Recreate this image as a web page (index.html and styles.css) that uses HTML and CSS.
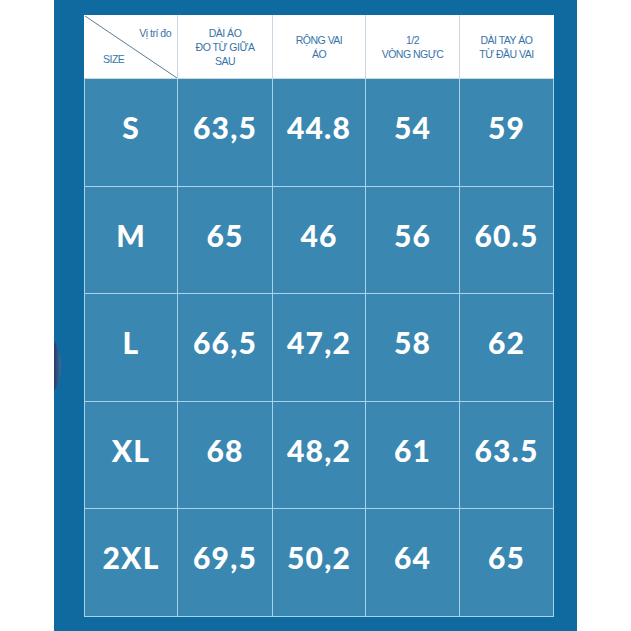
FILE: index.html
```html
<!DOCTYPE html>
<html lang="vi">
<head>
<meta charset="utf-8">
<title>Bảng size</title>
<link rel="stylesheet" href="styles.css">
</head>
<body>
<div class="panel">
  <div class="edge-blob"></div>
  <table class="size-table">
    <colgroup>
      <col class="c1"><col class="c2"><col class="c3"><col class="c4"><col class="c5">
    </colgroup>
    <thead>
      <tr>
        <th class="corner">
          <svg class="diag" viewBox="0 0 100 100" preserveAspectRatio="none"><line x1="0" y1="0" x2="100" y2="100"/></svg>
          <span class="pos">Vị trí đo</span>
          <span class="size">SIZE</span>
        </th>
        <th>DÀI ÁO<br>ĐO TỪ GIỮA<br>SAU</th>
        <th>RỘNG VAI<br>ÁO</th>
        <th>1/2<br>VÒNG NGỰC</th>
        <th>DÀI TAY ÁO<br>TỪ ĐẦU VAI</th>
      </tr>
    </thead>
    <tbody>
      <tr><td>S</td><td>63,5</td><td>44.8</td><td>54</td><td>59</td></tr>
      <tr><td>M</td><td>65</td><td>46</td><td>56</td><td>60.5</td></tr>
      <tr><td>L</td><td>66,5</td><td>47,2</td><td>58</td><td>62</td></tr>
      <tr><td>XL</td><td>68</td><td>48,2</td><td>61</td><td>63.5</td></tr>
      <tr><td>2XL</td><td>69,5</td><td>50,2</td><td>64</td><td>65</td></tr>
    </tbody>
  </table>
</div>
</body>
</html>
```

FILE: styles.css
```css
html, body {
  margin: 0;
  padding: 0;
  background: #ffffff;
}

.panel {
  position: relative;
  overflow: hidden;
  margin-left: 54px;
  width: 523px;
  height: 631px;
  box-sizing: border-box;
  padding: 15px 0 0 30px;
  background: #0f6b9f;
}

.edge-blob {
  position: absolute;
  left: -22px;
  top: 337px;
  width: 29px;
  height: 58px;
  border-radius: 50%;
  background: linear-gradient(90deg, #1c2a52 0%, #263a6a 75%, #3b6c9c 100%);
}

.size-table {
  border-collapse: collapse;
  table-layout: fixed;
  width: 469px;
}

.c1 { width: 93px; }
.c2 { width: 95px; }
.c3 { width: 93px; }
.c4 { width: 94px; }
.c5 { width: 94px; }

.size-table th,
.size-table td {
  border: 1.5px solid #a8d3ec;
  padding: 0;
  text-align: center;
  vertical-align: middle;
}

.size-table th {
  height: 62px;
  background: #ffffff;
  color: #3674a8;
  font-family: "Liberation Sans", Arial, sans-serif;
  font-weight: normal;
  font-size: 10.5px;
  line-height: 14px;
  letter-spacing: -0.5px;
  border-color: #c9d8e3;
}

.size-table thead th {
  border-top-color: #ffffff;
}

.size-table thead th:first-child {
  border-left-color: #ffffff;
}

.size-table thead th:last-child {
  border-right-color: #ffffff;
}

.corner {
  position: relative;
}

.diag {
  position: absolute;
  left: 0;
  top: 0;
  width: 100%;
  height: 100%;
}

.diag line {
  stroke: #5b7a94;
  stroke-width: 1;
  vector-effect: non-scaling-stroke;
}

.corner .pos {
  position: absolute;
  right: 6px;
  top: 10px;
}

.corner .size {
  position: absolute;
  left: 18px;
  bottom: 12px;
}

.size-table td {
  height: 96.5px;
  background: #3a87b2;
  color: #ffffff;
  font-family: Lato, "Open Sans", sans-serif;
  font-weight: 900;
  font-size: 30px;
  letter-spacing: 1.2px;
  padding-bottom: 10px;
}
```
